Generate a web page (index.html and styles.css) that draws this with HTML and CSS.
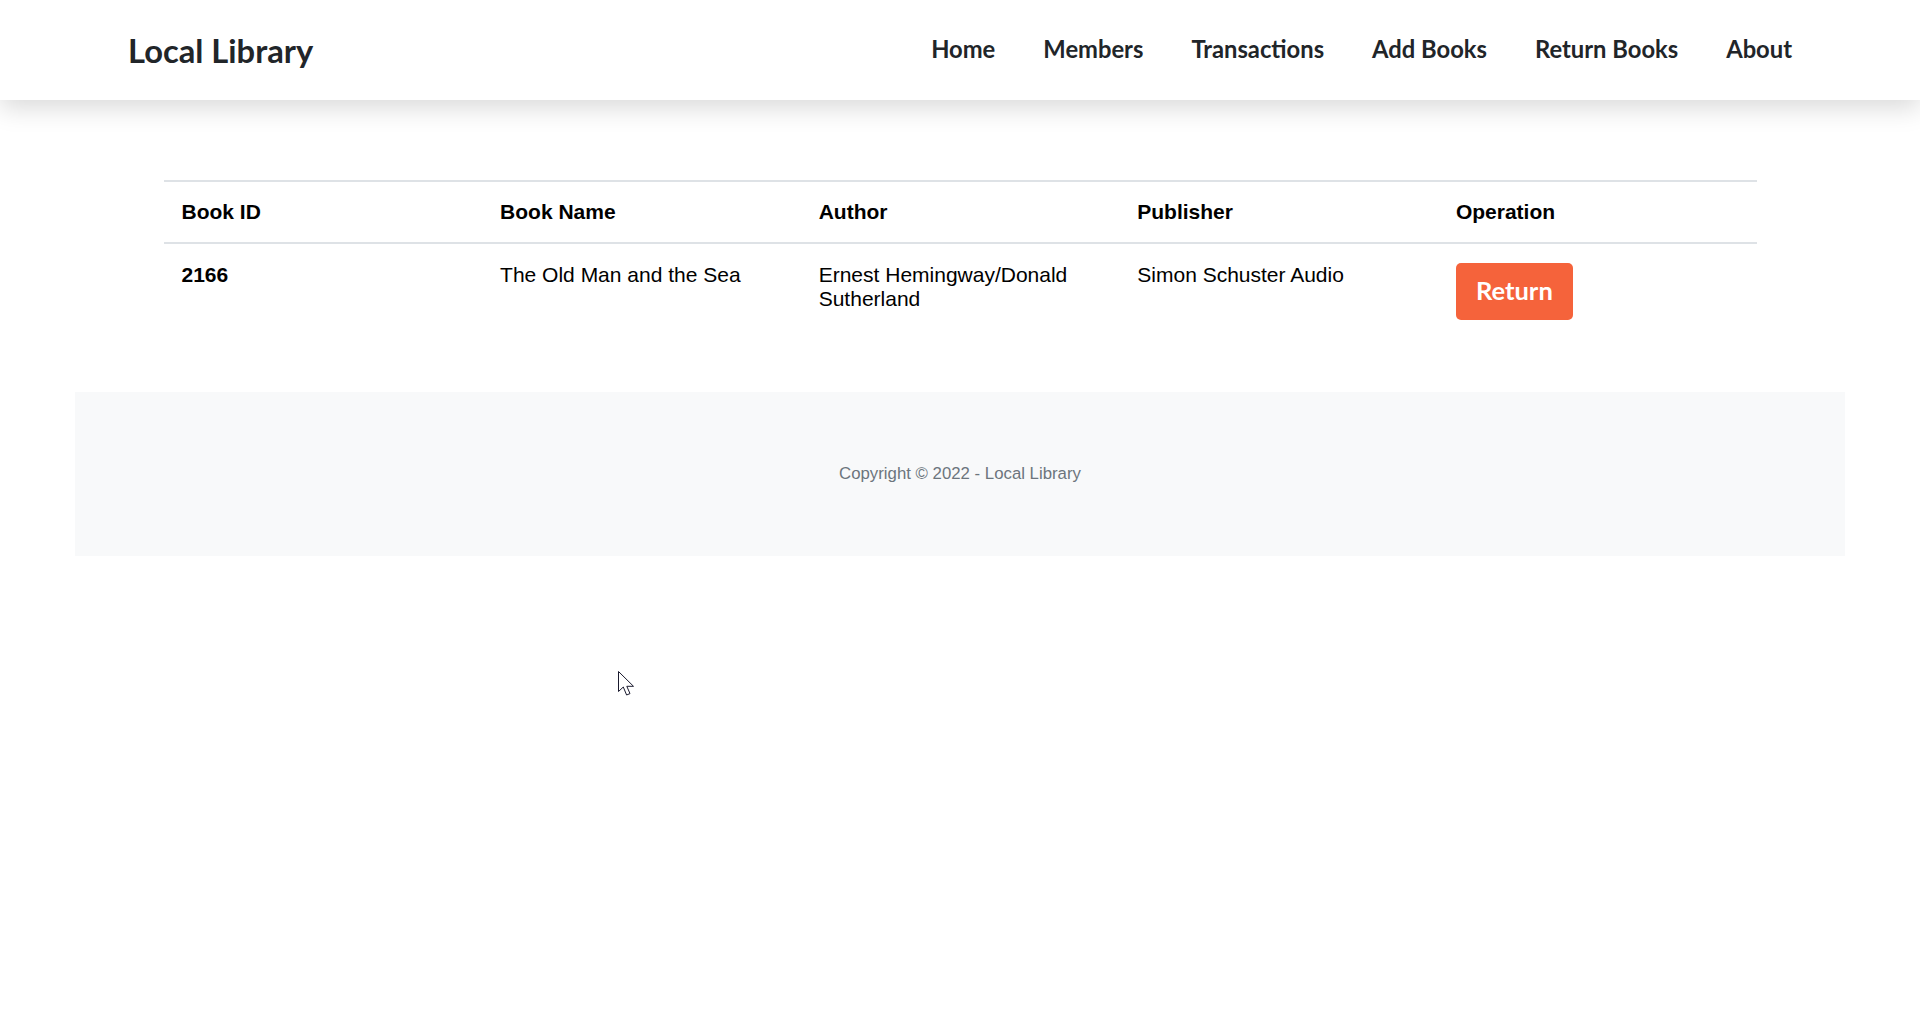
FILE: index.html
```html
<!DOCTYPE html>
<html lang="en">
<head>
<meta charset="utf-8">
<title>Local Library</title>
<link rel="stylesheet" href="styles.css">
</head>
<body>
<header class="topbar">
  <a class="brand" href="#">Local Library</a>
  <nav class="nav">
    <a href="#">Home</a>
    <a href="#">Members</a>
    <a href="#">Transactions</a>
    <a href="#">Add Books</a>
    <a href="#">Return Books</a>
    <a href="#">About</a>
  </nav>
</header>
<main class="content">
  <table class="books">
    <thead>
      <tr>
        <th>Book ID</th>
        <th>Book Name</th>
        <th>Author</th>
        <th>Publisher</th>
        <th>Operation</th>
      </tr>
    </thead>
    <tbody>
      <tr>
        <td class="id">2166</td>
        <td>The Old Man and the Sea</td>
        <td>Ernest Hemingway/Donald Sutherland</td>
        <td>Simon Schuster Audio</td>
        <td><button class="btn-return" type="button">Return</button></td>
      </tr>
    </tbody>
  </table>
</main>
<footer class="footer">
  <p>Copyright © 2022 - Local Library</p>
</footer>
<svg class="cursor" width="18" height="27" viewBox="0 0 18 27"><path d="M0.5 0.5 L0.5 20.5 L5.3 16 L8.6 24 L12 22.6 L8.8 15.3 L15.5 15.3 Z" fill="#fff" stroke="#1a1a2e" stroke-width="1" stroke-linejoin="miter"/></svg>
</body>
</html>
```
FILE: styles.css
```css
html, body {
  margin: 0;
  padding: 0;
  background: #fff;
}
body {
  font-family: "Liberation Sans", Arial, sans-serif;
  color: #000;
  position: relative;
  min-height: 1020px;
}
.topbar {
  height: 100px;
  display: flex;
  align-items: center;
  justify-content: space-between;
  padding: 0 128px 0 128px;
  background: #fff;
  box-shadow: 0 8px 24px rgba(0, 0, 0, 0.15);
  position: relative;
  z-index: 1;
}
.brand {
  font-family: Lato, "Open Sans", sans-serif;
  font-weight: 700;
  font-size: 32.7px;
  color: #212529;
  text-decoration: none;
}
.nav {
  display: flex;
  gap: 48px;
  margin-top: -2px;
}
.nav a {
  font-family: Lato, "Open Sans", sans-serif;
  font-weight: 700;
  font-size: 23.75px;
  color: #212529;
  text-decoration: none;
}
.content {
  padding: 80px 75px 54px;
}
.books {
  width: 90%;
  margin: 0 auto;
  border-collapse: collapse;
  table-layout: fixed;
  border-top: 2px solid #dee2e6;
  font-size: 21px;
}
.books th,
.books td {
  text-align: left;
  vertical-align: top;
  padding: 18px 18px;
}
.books td {
  padding-top: 19px;
}
.books th {
  font-weight: 700;
  border-bottom: 2px solid #dee2e6;
}
.books td.id {
  font-weight: 700;
}
.btn-return {
  display: block;
  width: 117px;
  height: 57px;
  border: none;
  border-radius: 5px;
  background: #f5633b;
  color: #fff;
  font-family: Lato, "Open Sans", sans-serif;
  font-weight: 700;
  font-size: 25.5px;
  padding: 0 0 4px;
  cursor: pointer;
}
.footer {
  margin: 0 75px;
  height: 164px;
  background: #f8f9fa;
  display: flex;
  align-items: center;
  justify-content: center;
}
.footer p {
  margin: 0;
  color: #6c757d;
  font-size: 16.8px;
}
.cursor {
  position: absolute;
  left: 618px;
  top: 671px;
}
```
